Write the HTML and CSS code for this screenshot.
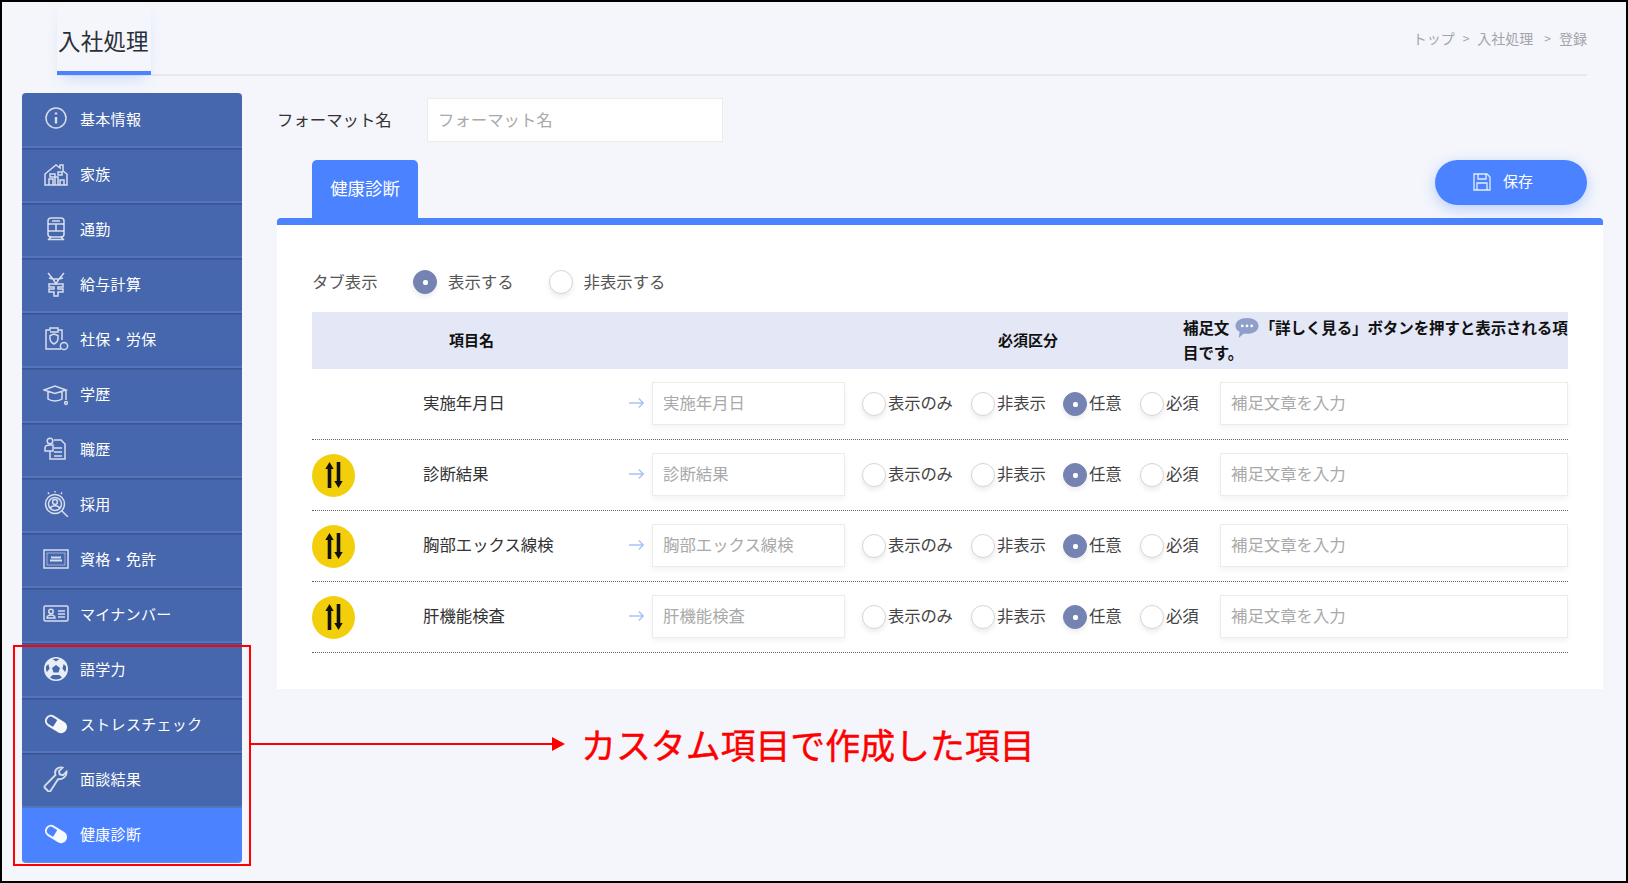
FILE: index.html
```html
<!DOCTYPE html>
<html lang="ja">
<head>
<meta charset="utf-8">
<title>入社処理</title>
<link rel="stylesheet" href="styles.css">
</head>
<body>
<div class="frame">
  <header class="top">
    <h1 class="title">入社処理</h1>
    <nav class="crumbs"><span>トップ</span><span class="sep">&gt;</span><span>入社処理</span><span class="sep sep-wide">&gt;</span><span>登録</span></nav>
  </header>
  <div class="layout">
    <ul class="side">
      <li class="side-item"><svg class="ico" viewBox="0 0 26 26"><circle cx="13" cy="13" r="10"/><path d="M13 12v6.500M13 7.500v2" stroke-width="2.400"/></svg>基本情報</li>
      <li class="side-item"><svg class="ico" viewBox="0 0 26 26"><path d="M2 24V13L13 4l4 3V4h3v6l4 3v11zM6 24v-6h4v6M12 24v-8h3v8M17 24v-5h4v5M7 13h5v3H7zM15 11h4v3h-4z"/></svg>家族</li>
      <li class="side-item"><svg class="ico" viewBox="0 0 26 26"><rect x="5" y="2" width="16" height="19" rx="3"/><path d="M5 8h16M5 15h16M13 8v7M9 5h8M8 21l-3 3M18 21l3 3M5 23.500h16"/></svg>通勤</li>
      <li class="side-item"><svg class="ico" viewBox="0 0 26 26"><path d="M5 2l5 6-4-1M21 2l-5 6 4-1M10 8h6l-3 5zM6 13h14v3h-5v2h5v3h-5v4h-4v-4H6v-3h5v-2H6z"/></svg>給与計算</li>
      <li class="side-item"><svg class="ico" viewBox="0 0 26 26"><path d="M18 23H3V4h4V2h8v2h4v10M7 6h8V4"/><path d="M11 8l4 1.500v3c0 3-2 4.500-4 5.500-2-1-4-2.500-4-5.500v-3z"/><circle cx="21" cy="20" r="3.600"/></svg>社保・労保</li>
      <li class="side-item"><svg class="ico" viewBox="0 0 26 26"><path d="M1 9l11-4 11 4-11 3.500zM5 11v7c3 2.500 11 2.500 14 0v-7M23 9v10"/><circle cx="23" cy="22" r="1.400"/></svg>学歴</li>
      <li class="side-item"><svg class="ico" viewBox="0 0 26 26"><circle cx="7" cy="5" r="2.800"/><path d="M2 15v-3c0-2 2-3 5-3h3v6zM7 15v8h15V8l-4-4h-7M11 12h8M11 16h8M11 20h8"/></svg>職歴</li>
      <li class="side-item"><svg class="ico" viewBox="0 0 26 26"><circle cx="12" cy="13" r="9.500"/><circle cx="12" cy="13" r="6.500"/><circle cx="12" cy="11" r="2.400"/><path d="M7.500 17c1-3 8-3 9 0M19 20l6 6M12 0v1.500M5 1.500l1 1.500M19 1.500l-1 1.500"/></svg>採用</li>
      <li class="side-item"><svg class="ico" viewBox="0 0 26 26"><rect x="1" y="4" width="24" height="18"/><rect x="4" y="7" width="18" height="12" stroke-width=".6"/><path d="M8 11.500h10M7 14.500h12" stroke-width="2"/></svg>資格・免許</li>
      <li class="side-item"><svg class="ico" viewBox="0 0 26 26"><rect x="1" y="5" width="24" height="15" rx="1.500"/><circle cx="8" cy="10.500" r="2.200"/><path d="M4 17c.5-4 7.500-4 8 0zM15 10h7M15 13h7M15 16h7"/></svg>マイナンバー</li>
      <li class="side-item"><svg class="ico ico-solid" viewBox="0 0 26 26"><circle class="ball" cx="13" cy="13" r="12"/><path class="cut" d="M13 9l4 3-1.500 4.600h-5L9 12zM13 2.500c-1.300 0-2.400.2-3.400.6L13 5.600l3.400-2.500c-1-.4-2.100-.6-3.400-.6zM3 10.500c-.3 2 0 3.800 1 5.500l2.600-3.600-1.300-4.500zM23 10.500c.3 2 0 3.800-1 5.500l-2.600-3.600 1.300-4.500zM7 21.500c1.600 1.300 3.800 2 6 2s4.400-.7 6-2l-2.600-2.500H9.600z"/></svg>語学力</li>
      <li class="side-item"><svg class="ico ico-solid" viewBox="0 0 26 26"><g transform="rotate(32 13 13)"><rect class="pill-open" x="2" y="8" width="22" height="10" rx="5"/><path class="pill-fill" d="M12 8h7a5 5 0 0 1 0 10h-7z"/></g></svg>ストレスチェック</li>
      <li class="side-item"><svg class="ico ico-wrench" viewBox="0 0 26 26"><path d="M5 25l-3-3c-.8-.8-.8-1.600 0-2.400L12.500 9c-1-3 0-5.500 2.500-7 1.500-.8 3-.8 4.500-.3L16 5.200l.7 3.300 3.300.7 3.500-3.500c.5 4-3 8-8.500 7.500L7.500 25c-.8.700-1.700.700-2.500 0z"/></svg>面談結果</li>
      <li class="side-item side-item-active"><svg class="ico ico-solid" viewBox="0 0 26 26"><g transform="rotate(32 13 13)"><rect class="pill-open" x="2" y="8" width="22" height="10" rx="5"/><path class="pill-fill" d="M12 8h7a5 5 0 0 1 0 10h-7z"/></g></svg>健康診断</li>
    </ul>
    <main class="main">
      <div class="format-row">
        <label class="format-label">フォーマット名</label>
        <input class="field field-format" placeholder="フォーマット名">
      </div>
      <div class="tab-row">
        <div class="tab">健康診断</div>
        <button class="save"><svg class="save-ico" viewBox="0 0 18 18"><path d="M1 1h13l3 3v13H1z"/><path d="M5 1v5h8V1M4 17v-7h10v7"/></svg>保存</button>
      </div>
      <section class="panel">
        <div class="tabshow">
          <span class="tabshow-label">タブ表示</span>
          <span class="radio radio-on"></span><span class="tabshow-opt tabshow-opt-first">表示する</span>
          <span class="radio"></span><span class="tabshow-opt">非表示する</span>
        </div>
        <div class="grid-head">
          <div>項目名</div>
          <div>必須区分</div>
          <div class="head-note">補足文 <svg class="bubble" viewBox="0 0 24 22"><path d="M12 1c6.500 0 11 3 11 7.500S18.500 16 12 16c-1 0-2-.1-3-.3L4 20l1-5.800C2.500 13 1 11 1 8.500 1 4 5.500 1 12 1z"/><circle cx="7.500" cy="8.500" r="1.300"/><circle cx="12" cy="8.500" r="1.300"/><circle cx="16.500" cy="8.500" r="1.300"/></svg>「詳しく見る」ボタンを押すと表示される項目です。</div>
        </div>

        <div class="grid-row">
          <div></div>
          <div class="name">実施年月日</div>
          <svg class="arrow" viewBox="0 0 18 12"><path d="M0 6h16M11 1l5 5-5 5"/></svg>
          <input class="field" placeholder="実施年月日">
          <div class="radios">
            <span class="radio"></span><span class="opt opt-a">表示のみ</span>
            <span class="radio"></span><span class="opt opt-b">非表示</span>
            <span class="radio radio-on"></span><span class="opt opt-c">任意</span>
            <span class="radio"></span><span class="opt">必須</span>
          </div>
          <input class="field" placeholder="補足文章を入力">
        </div>

        <div class="grid-row">
          <div class="handle"><svg viewBox="0 0 18 28"><path d="M2.700 27V8H.3l4.200-7 4.200 7H6.300v19zM11.700 1v19H9.300l4.200 7 4.200-7h-2.400V1z"/></svg></div>
          <div class="name">診断結果</div>
          <svg class="arrow" viewBox="0 0 18 12"><path d="M0 6h16M11 1l5 5-5 5"/></svg>
          <input class="field" placeholder="診断結果">
          <div class="radios">
            <span class="radio"></span><span class="opt opt-a">表示のみ</span>
            <span class="radio"></span><span class="opt opt-b">非表示</span>
            <span class="radio radio-on"></span><span class="opt opt-c">任意</span>
            <span class="radio"></span><span class="opt">必須</span>
          </div>
          <input class="field" placeholder="補足文章を入力">
        </div>

        <div class="grid-row">
          <div class="handle"><svg viewBox="0 0 18 28"><path d="M2.700 27V8H.3l4.200-7 4.200 7H6.300v19zM11.700 1v19H9.300l4.200 7 4.200-7h-2.400V1z"/></svg></div>
          <div class="name">胸部エックス線検</div>
          <svg class="arrow" viewBox="0 0 18 12"><path d="M0 6h16M11 1l5 5-5 5"/></svg>
          <input class="field" placeholder="胸部エックス線検">
          <div class="radios">
            <span class="radio"></span><span class="opt opt-a">表示のみ</span>
            <span class="radio"></span><span class="opt opt-b">非表示</span>
            <span class="radio radio-on"></span><span class="opt opt-c">任意</span>
            <span class="radio"></span><span class="opt">必須</span>
          </div>
          <input class="field" placeholder="補足文章を入力">
        </div>

        <div class="grid-row">
          <div class="handle"><svg viewBox="0 0 18 28"><path d="M2.700 27V8H.3l4.200-7 4.200 7H6.300v19zM11.700 1v19H9.300l4.200 7 4.200-7h-2.400V1z"/></svg></div>
          <div class="name">肝機能検査</div>
          <svg class="arrow" viewBox="0 0 18 12"><path d="M0 6h16M11 1l5 5-5 5"/></svg>
          <input class="field" placeholder="肝機能検査">
          <div class="radios">
            <span class="radio"></span><span class="opt opt-a">表示のみ</span>
            <span class="radio"></span><span class="opt opt-b">非表示</span>
            <span class="radio radio-on"></span><span class="opt opt-c">任意</span>
            <span class="radio"></span><span class="opt">必須</span>
          </div>
          <input class="field" placeholder="補足文章を入力">
        </div>
      </section>
    </main>
  </div>
  <div class="note-box"></div>
  <div class="note-line"></div>
  <div class="note-head"></div>
  <div class="note-text">カスタム項目で作成した項目</div>
</div>
</body>
</html>
```
FILE: styles.css
```css
* { box-sizing: border-box; }
html, body { margin: 0; padding: 0; }
body {
  width: 1628px;
  height: 883px;
  overflow: hidden;
  font-family: "Noto Sans CJK JP", "Noto Sans", sans-serif;
  color: #333;
}
.frame {
  position: relative;
  width: 1628px;
  height: 883px;
  border: 2px solid #000;
  background: #f4f6fb;
  padding: 0 0 0 20px;
}
.top {
  display: flex;
  justify-content: space-between;
  height: 74px;
  margin: 0 39px 0 35px;
  border-bottom: 2px solid #e6e8f1;
}
.title {
  margin: 0;
  width: 94px;
  height: 73px;
  padding: 21px 0 0 1px;
  font-size: 22.5px;
  line-height: 34px;
  letter-spacing: .2px;
  font-weight: 400;
  color: #2b3038;
  border-bottom: 4px solid #4a82ff;
  box-shadow: 0 8px 14px -6px rgba(74, 130, 255, .28);
}
.crumbs {
  display: flex;
  gap: 7px;
  padding-top: 25px;
  font-size: 14px;
  line-height: 22px;
  color: #a2a5ab;
}
.sep { font-size: 12px; margin: 0 1px; }
.sep-wide { margin-left: 4px; }
.layout {
  display: flex;
  margin-top: 17px;
}
.side {
  list-style: none;
  margin: 0;
  padding: 0;
  width: 220px;
  flex: none;
}
.side-item {
  display: flex;
  align-items: center;
  gap: 11px;
  height: 55px;
  padding: 0 0 3px 21px;
  background: #4667ad;
  color: #fff;
  font-size: 15px;
  letter-spacing: .3px;
  border-top: 1px solid #3a5592;
  border-bottom: 2px solid #5275bd;
  box-shadow: inset 0 1px 0 #3f5d9e;
}
.side-item:first-child { border-top: 0; border-radius: 4px 4px 0 0; box-shadow: none; }
.side-item-active {
  background: #4a82ff;
  border-top: 0;
  border-bottom: 1px solid #6d8fd8;
  border-radius: 0 0 4px 4px;
  box-shadow: none;
}
.ico {
  width: 26px;
  height: 26px;
  flex: none;
  fill: none;
  stroke: rgba(255, 255, 255, .78);
  stroke-width: 1.500;
}
.ico-wrench { stroke-width: 1.900; }
.ico-solid { stroke: none; }
.ball { fill: rgba(255, 255, 255, .88); }
.cut { fill: #4667ad; }
.pill-open { fill: none; stroke: rgba(255, 255, 255, .92); stroke-width: 2; }
.pill-fill { fill: rgba(255, 255, 255, .95); }
.main {
  width: 1326px;
  margin-left: 35px;
  flex: none;
}
.format-row {
  display: flex;
  align-items: center;
  height: 44px;
  margin-top: 5px;
}
.format-label {
  width: 150px;
  padding-bottom: 2px;
  font-size: 16.4px;
  color: #333;
}
.field {
  display: block;
  width: 100%;
  height: 43px;
  padding: 0 10px 3px;
  border: 1px solid #ececec;
  background: #fff;
  font-family: inherit;
  font-size: 16.4px;
  color: #333;
  outline: 0;
  box-shadow: 0 3px 6px rgba(0, 0, 0, .05);
}
.field::placeholder { color: #a9a9a9; opacity: 1; }
.field-format { width: 296px; height: 44px; box-shadow: none; }
.tab-row {
  display: flex;
  justify-content: space-between;
  align-items: flex-start;
  height: 58px;
  margin-top: 18px;
  padding: 0 16px 0 35px;
}
.tab {
  width: 106px;
  height: 58px;
  padding-top: 16px;
  border-radius: 5px 5px 0 0;
  background: #4a82ff;
  color: #fff;
  font-size: 17.4px;
  line-height: 24px;
  text-align: center;
}
.save {
  display: flex;
  align-items: center;
  justify-content: center;
  gap: 12px;
  width: 152px;
  height: 45px;
  padding: 0 16px 4px 0;
  border: 0;
  border-radius: 23px;
  background: #4a82ff;
  color: #fff;
  font-family: inherit;
  font-size: 15px;
  box-shadow: 0 4px 14px rgba(74, 130, 255, .35);
}
.save-ico {
  width: 18px;
  height: 18px;
  margin-top: 3px;
  fill: none;
  stroke: rgba(255, 255, 255, .85);
  stroke-width: 1.300;
}
.panel {
  height: 471px;
  padding: 0 35px;
  background: #fff;
  border-top: 7px solid #4a82ff;
  border-radius: 4px 4px 0 0;
}
.tabshow {
  display: flex;
  align-items: center;
  height: 87px;
  padding: 27px 0 0 0;
  font-size: 16.4px;
  line-height: 24px;
  color: #555;
}
.tabshow-label { width: 101px; position: relative; top: -1px; }
.tabshow-opt { margin-left: 11px; position: relative; top: -1px; }
.tabshow-opt-first { margin-right: 35px; }
.radio {
  display: inline-block;
  position: relative;
  width: 24px;
  height: 24px;
  flex: none;
  border: 1px solid #d5d5d5;
  border-radius: 50%;
  background: #fff;
  box-shadow: 0 3px 5px rgba(0, 0, 0, .08);
}
.radio-on {
  background: #7583b3;
  border-color: #7583b3;
}
.radio-on::after {
  content: "";
  position: absolute;
  left: 9px;
  top: 9px;
  width: 5px;
  height: 5px;
  border-radius: 2px;
  background: #fff;
}
.grid-head {
  display: grid;
  grid-template-columns: 549px 185px 385px;
  align-items: center;
  height: 57px;
  padding: 0 0 3px 137px;
  background: #e4e8f6;
  font-size: 15px;
  font-weight: 700;
  color: #111;
}
.head-note {
  font-size: 15.5px;
  line-height: 24px;
  letter-spacing: -.1px;
}
.bubble {
  width: 26px;
  height: 23px;
  vertical-align: -6px;
  margin-left: 1px;
  fill: #8f9fc9;
}
.bubble circle { fill: #fff; }
.grid-row {
  display: grid;
  grid-template-columns: 111px 205px 24px 193px 375px 348px;
  align-items: center;
  height: 71px;
  border-bottom: 1px dotted #666;
}
.grid-row > .field { margin-bottom: 2px; }
.name { padding-bottom: 4px; font-size: 16.4px; color: #333; }
.arrow {
  width: 16px;
  height: 12px;
  margin: 0 0 2px 1px;
  fill: none;
  stroke: #a9c2f5;
  stroke-width: 1.600;
}
.handle {
  display: flex;
  align-items: center;
  justify-content: center;
  width: 43px;
  height: 43px;
  border-radius: 50%;
  background: #f2cf0a;
}
.handle svg {
  width: 18px;
  height: 28px;
  fill: #111;
}
.radios {
  display: flex;
  align-items: center;
  padding-left: 17px;
  font-size: 16.4px;
  color: #444;
  letter-spacing: -.2px;
}
.opt { margin-left: 2px; padding-bottom: 4px; }
.opt-a { width: 83px; }
.opt-b { width: 66px; }
.opt-c { width: 51px; }
.note-box {
  position: absolute;
  left: 11px;
  top: 643px;
  width: 238px;
  height: 221px;
  border: 2px solid #f00;
}
.note-line {
  position: absolute;
  left: 247px;
  top: 741px;
  width: 306px;
  height: 2px;
  background: #f00;
}
.note-head {
  position: absolute;
  left: 550px;
  top: 735px;
  border-left: 13px solid #f00;
  border-top: 7px solid transparent;
  border-bottom: 7px solid transparent;
}
.note-text {
  position: absolute;
  left: 579px;
  top: 715px;
  font-size: 34.900px;
  line-height: 54px;
  color: #f00;
  -webkit-text-stroke: .4px #f00;
  white-space: nowrap;
}
```
